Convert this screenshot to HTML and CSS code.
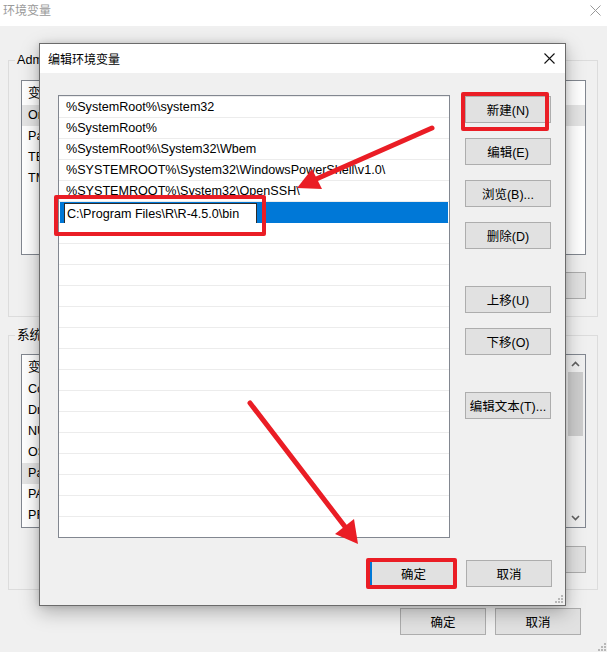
FILE: index.html
```html
<!DOCTYPE html>
<html lang="zh-CN">
<head>
<meta charset="utf-8">
<title>环境变量</title>
<link rel="stylesheet" href="styles.css">
</head>
<body>
<div class="bgwin">
  <div class="bg-titlebar">
    <span class="bg-title">环境变量</span>
    <svg class="bg-close" width="11" height="11" viewBox="0 0 11 11"><path d="M0.5 0.5L10.5 10.5M10.5 0.5L0.5 10.5" stroke="#9a9a9a" stroke-width="1"/></svg>
  </div>
  <div class="bg-body">
    <div class="group group-user">
      <div class="legend">Administrator 的用户变量(U)</div>
      <div class="vlist user-list">
        <div class="vhead">变量</div>
        <div class="vrow sel">OneDrive</div>
        <div class="vrow">Path</div>
        <div class="vrow">TEMP</div>
        <div class="vrow">TMP</div>
      </div>
      <div class="grp-btns">
        <div class="btn bg-btn">新建(N)...</div>
        <div class="btn bg-btn">编辑(E)...</div>
        <div class="btn bg-btn">删除(D)</div>
      </div>
    </div>
    <div class="group group-sys">
      <div class="legend">系统变量(S)</div>
      <div class="vlist sys-list">
        <div class="vlist-rows">
          <div class="vhead">变量</div>
          <div class="vrow">ComSpec</div>
          <div class="vrow">DriverData</div>
          <div class="vrow">NUMBER_OF_PROCESSORS</div>
          <div class="vrow">OS</div>
          <div class="vrow sel">Path</div>
          <div class="vrow">PATHEXT</div>
          <div class="vrow">PROCESSOR_ARCHITECTURE</div>
        </div>
        <div class="vscroll">
          <svg width="9" height="6" viewBox="0 0 9 6"><path d="M1 5L4.5 1.5L8 5" fill="none" stroke="#606060" stroke-width="1.6"/></svg>
          <div class="vthumb"></div>
          <div class="vspacer"></div>
          <svg width="9" height="6" viewBox="0 0 9 6"><path d="M1 1L4.5 4.5L8 1" fill="none" stroke="#606060" stroke-width="1.6"/></svg>
        </div>
      </div>
      <div class="grp-btns">
        <div class="btn bg-btn">新建(W)...</div>
        <div class="btn bg-btn">编辑(I)...</div>
        <div class="btn bg-btn">删除(L)</div>
      </div>
    </div>
    <div class="bg-footer">
      <div class="btn foot-btn">确定</div>
      <div class="btn foot-btn">取消</div>
    </div>
  </div>
  <svg class="grip bg-grip" width="8" height="8" viewBox="0 0 8 8"><g fill="#b8b8b8"><rect x="6" y="0" width="2" height="2"/><rect x="3" y="3" width="2" height="2"/><rect x="6" y="3" width="2" height="2"/><rect x="0" y="6" width="2" height="2"/><rect x="3" y="6" width="2" height="2"/><rect x="6" y="6" width="2" height="2"/></g></svg>
</div>

<div class="dialog">
  <div class="dlg-titlebar">
    <span class="dlg-title">编辑环境变量</span>
    <svg class="dlg-close" width="11" height="11" viewBox="0 0 11 11"><path d="M0.5 0.5L10.5 10.5M10.5 0.5L0.5 10.5" stroke="#111" stroke-width="1.1"/></svg>
  </div>
  <div class="dlg-body">
    <div class="dlg-main">
      <div class="plist">
        <div class="prow">%SystemRoot%\system32</div>
        <div class="prow">%SystemRoot%</div>
        <div class="prow">%SystemRoot%\System32\Wbem</div>
        <div class="prow">%SYSTEMROOT%\System32\WindowsPowerShell\v1.0\</div>
        <div class="prow">%SYSTEMROOT%\System32\OpenSSH\</div>
        <div class="prow psel"><span class="pedit">C:\Program Files\R\R-4.5.0\bin</span></div>
      </div>
      <div class="dlg-btns">
        <div class="btn dbtn">新建(N)</div>
        <div class="btn dbtn">编辑(E)</div>
        <div class="btn dbtn">浏览(B)...</div>
        <div class="btn dbtn">删除(D)</div>
        <div class="btn dbtn gap-before">上移(U)</div>
        <div class="btn dbtn">下移(O)</div>
        <div class="btn dbtn gap-before">编辑文本(T)...</div>
      </div>
    </div>
    <div class="dlg-footer">
      <div class="btn dbtn default">确定</div>
      <div class="btn dbtn">取消</div>
    </div>
  </div>
  <svg class="grip dlg-grip" width="8" height="8" viewBox="0 0 8 8"><g fill="#b8b8b8"><rect x="6" y="0" width="2" height="2"/><rect x="3" y="3" width="2" height="2"/><rect x="6" y="3" width="2" height="2"/><rect x="0" y="6" width="2" height="2"/><rect x="3" y="6" width="2" height="2"/><rect x="6" y="6" width="2" height="2"/></g></svg>
</div>

<div class="mark mark-edit"></div>
<div class="mark mark-new"></div>
<div class="mark mark-ok"></div>
<svg class="arrows" width="607" height="652" viewBox="0 0 607 652">
  <g stroke="#ea1d25" stroke-width="5" stroke-linecap="round" fill="#ea1d25">
    <line x1="432" y1="128" x2="314" y2="180"/>
    <line x1="250" y1="403" x2="346" y2="528"/>
  </g>
  <g fill="#ea1d25">
    <polygon points="297,188 322,189 312,169"/>
    <polygon points="358,544 335,534 354,519"/>
  </g>
</svg>
</body>
</html>
```

FILE: styles.css
```css
* { box-sizing: border-box; }
html, body { margin: 0; padding: 0; }
body {
  width: 607px;
  height: 652px;
  overflow: hidden;
  position: relative;
  background: #f0f0f0;
  font-family: "Liberation Sans", "Noto Sans CJK SC", sans-serif;
  font-size: 12px;
  color: #000;
}

/* background window */
.bgwin { width: 607px; height: 652px; position: relative; }
.bg-titlebar {
  height: 26px;
  background: #fff;
  display: flex;
  align-items: flex-start;
  justify-content: space-between;
  padding: 3px 6px 0 3px;
}
.bg-title { color: #9a9a9a; font-size: 12px; line-height: 16px; }
.bg-close { margin-top: 2px; }
.bg-body { padding: 34px 9px 0 8px; }
.group {
  position: relative;
  border: 1px solid #dcdcdc;
  padding: 19px 11px 17px 12px;
}
.group-sys { margin-top: 18px; padding-top: 18px; padding-bottom: 16px; }
.legend {
  position: absolute;
  left: 6px;
  top: -8px;
  white-space: nowrap;
  padding: 0 2px;
  background: #f0f0f0;
  line-height: 14px;
  font-size: 12.6px;
}
.vlist {
  background: #fff;
  border: 1px solid #828790;
  overflow: hidden;
}
.user-list { height: 175px; }
.sys-list { height: 174px; display: flex; }
.vlist-rows { flex: 1; }
.vhead { height: 24px; line-height: 24px; padding-left: 6px; font-size: 12.6px; }
.vrow { height: 21px; line-height: 21px; padding-left: 6px; white-space: nowrap; font-size: 12.6px; }
.vrow.sel { background: #e5e5e5; }
.vscroll {
  width: 20px;
  background: #f0f0f0;
  display: flex;
  flex-direction: column;
  align-items: center;
  padding: 6px 0 6px;
}
.vthumb { width: 15px; height: 64px; background: #cdcdcd; margin-top: 5px; }
.vspacer { flex: 1; }
.grp-btns {
  display: flex;
  justify-content: flex-end;
  gap: 10px;
  margin-top: 17px;
}
.group-sys .grp-btns { margin-top: 18px; }
.btn {
  height: 27px;
  background: #e1e1e1;
  border: 1px solid #adadad;
  display: flex;
  align-items: center;
  justify-content: center;
  white-space: nowrap;
  font-size: 12.5px;
}
.bg-btn { width: 86px; }
.bg-footer {
  display: flex;
  justify-content: flex-end;
  gap: 9px;
  margin-top: 18px;
  padding-right: 17px;
}
.foot-btn { width: 86px; }
.grip { position: absolute; }
.bg-grip { right: 1px; bottom: 1px; }

/* dialog */
.dialog {
  position: absolute;
  left: 39px;
  top: 43px;
  width: 527px;
  height: 563px;
  background: #f0f0f0;
  border: 1px solid #6b6b6b;
  box-shadow: 0 6px 18px rgba(0, 0, 0, 0.28), 0 0 6px rgba(0, 0, 0, 0.12);
}
.dlg-titlebar {
  height: 29px;
  background: #fff;
  display: flex;
  align-items: center;
  justify-content: space-between;
  padding: 0 10px 0 8px;
}
.dlg-title { font-size: 12px; }
.dlg-body { padding: 22px 13px 0 18px; }
.dlg-main { display: flex; gap: 15px; }
.plist {
  width: 392px;
  height: 443px;
  border: 1px solid #828790;
  background: #fff repeating-linear-gradient(to bottom, #fff 0 20px, #ececec 20px 21px) 0 1px;
  padding: 1px 1px 0;
  font-size: 12.6px;
}
.prow {
  height: 21px;
  line-height: 21px;
  padding-left: 6px;
  white-space: nowrap;
  overflow: hidden;
}
.prow.psel {
  background: #0078d7;
  padding-left: 4px;
  padding-top: 1px;
  line-height: normal;
}
.pedit {
  display: flex;
  align-items: center;
  width: 193px;
  height: 21px;
  background: #fff;
  border: 1px solid #2b2b2b;
  padding-left: 2px;
}
.dlg-btns {
  width: 86px;
  padding-top: 1px;
  display: flex;
  flex-direction: column;
  gap: 15px;
}
.dbtn { width: 86px; }
.dlg-btns .gap-before { margin-top: 22px; }
.dlg-footer {
  display: flex;
  justify-content: flex-end;
  gap: 10px;
  margin-top: 22px;
}
.dbtn.default { border-color: #0078d7; border-left-width: 2px; }
.dlg-grip { right: 2px; bottom: 2px; }

/* annotations */
.mark {
  position: absolute;
  border: 4px solid #ea1d25;
  border-radius: 2px;
}
.mark-edit { left: 54px; top: 195px; width: 212px; height: 41px; }
.mark-new { left: 461px; top: 92px; width: 88px; height: 39px; }
.mark-ok { left: 366px; top: 558px; width: 91px; height: 31px; }
.arrows { position: absolute; left: 0; top: 0; pointer-events: none; }
```
